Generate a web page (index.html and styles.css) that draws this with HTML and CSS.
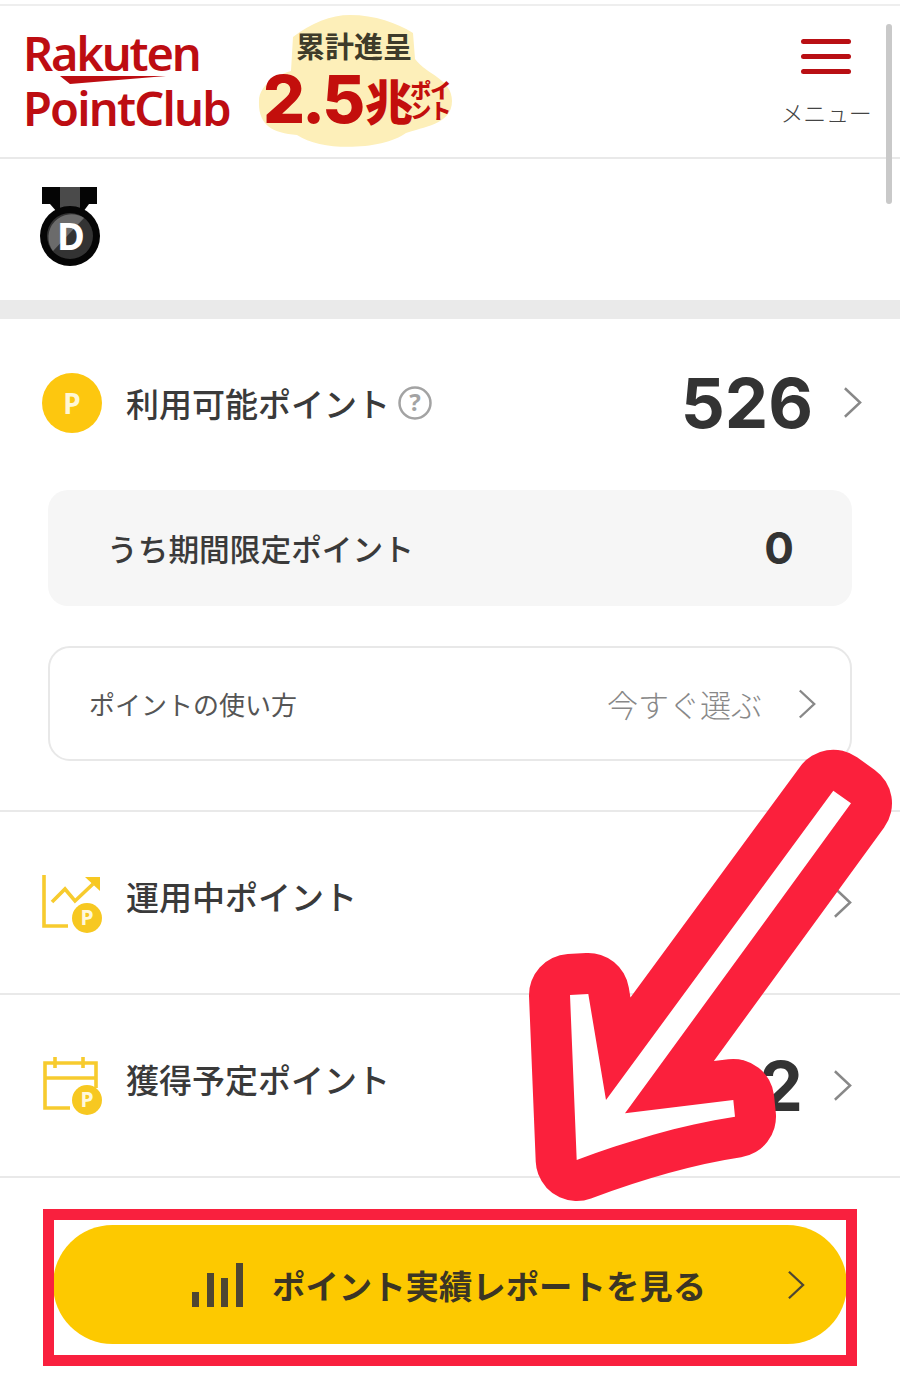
FILE: index.html
```html
<!DOCTYPE html>
<html lang="ja">
<head>
<meta charset="utf-8">
<title>Rakuten PointClub</title>
<link rel="stylesheet" href="styles.css">
</head>
<body>
<div class="page">
  <header class="header">
    <div class="logo">
      <div class="logo-top">Rakuten</div>
      <svg class="logo-swoosh" viewBox="0 0 110 9"><path d="M0 0H106L10 8Z"/></svg>
      <div class="logo-bottom">PointClub</div>
    </div>
    <div class="badge">
      <svg class="badge-blob" viewBox="0 0 200 136"><path d="M93 0C118 0 140 8 156 18L158 44C170 60 195 64 195 86C195 110 165 112 149 118C128 134 66 138 40 120C15 118 1 110 2 86C2 70 20 60 34 56L36 22C54 8 74 0 93 0Z"/></svg>
      <div class="badge-top">累計進呈</div>
      <div class="badge-main">
        <span class="badge-num">2.5</span>
        <span class="badge-unit">兆</span>
        <span class="badge-small">ポイ<br>ント</span>
      </div>
    </div>
    <div class="menu">
      <div class="burger"><i></i><i></i><i></i></div>
      <div class="menu-label">メニュー</div>
    </div>
  </header>

  <section class="rank">
    <svg class="medal" viewBox="0 0 62 80">
      <path class="m-black" d="M3 0H58V17H50L44 25H18L11 17H3Z"/>
      <path class="m-strip" d="M21 0H41V22H21Z"/>
      <circle class="m-black" cx="31" cy="49" r="30"/>
      <circle class="m-dark" cx="31" cy="49" r="23"/>
      <path class="m-light" d="M14 64A23 23 0 0 1 45 31Z"/>
      <text class="m-letter" x="32" y="63">D</text>
    </svg>
  </section>

  <div class="band"></div>

  <section class="points">
    <div class="row-main">
      <div class="coin">P</div>
      <div class="label">利用可能ポイント</div>
      <svg class="help" viewBox="0 0 34 34"><circle cx="17" cy="17" r="15.5"/><text x="17" y="25">?</text></svg>
      <div class="value">526</div>
      <svg class="chev chev-main" viewBox="0 0 20 34"><path d="M2 2L18 17L2 32"/></svg>
    </div>
    <div class="limited">
      <div class="limited-label">うち期間限定ポイント</div>
      <div class="limited-value">0</div>
    </div>
    <div class="usage">
      <div class="usage-label">ポイントの使い方</div>
      <div class="usage-link">今すぐ選ぶ</div>
      <svg class="chev chev-usage" viewBox="0 0 20 34"><path d="M2 2L18 17L2 32"/></svg>
    </div>
  </section>

  <section class="row">
    <svg class="row-icon" viewBox="0 0 64 64">
      <path class="i-line" d="M4 4V55H28"/>
      <path class="i-line" d="M12 31L25 18L35 30L53 13"/>
      <path class="i-fill" d="M45 6H60V20Z"/>
      <circle class="i-fill" cx="47" cy="47" r="15"/>
      <text class="i-p" x="47" y="54">P</text>
    </svg>
    <div class="label">運用中ポイント</div>
    <svg class="chev chev-row" viewBox="0 0 20 34"><path d="M2 2L18 17L2 32"/></svg>
  </section>

  <section class="row">
    <svg class="row-icon" viewBox="0 0 64 64">
      <path class="i-line" d="M5 24V9H56V24M5 24H56M5 24V54H30M56 24V34"/>
      <path class="i-line" d="M15 3V14M43 3V14"/>
      <circle class="i-fill" cx="47" cy="46" r="15"/>
      <text class="i-p" x="47" y="53">P</text>
    </svg>
    <div class="label">獲得予定ポイント</div>
    <div class="value value-row">22</div>
    <svg class="chev chev-row" viewBox="0 0 20 34"><path d="M2 2L18 17L2 32"/></svg>
  </section>

  <div class="cta-wrap">
    <div class="cta">
      <svg class="cta-icon" viewBox="0 0 52 44"><path d="M0 29H7V44H0ZM15 10H22V44H15ZM29 15H36V44H29ZM44 0H51V44H44Z"/></svg>
      <div class="cta-text">ポイント実績レポートを見る</div>
      <svg class="chev chev-cta" viewBox="0 0 20 34"><path d="M2 2L18 17L2 32"/></svg>
    </div>
  </div>

  <div class="scrollbar"></div>
  <svg class="arrow" viewBox="0 0 900 1380">
    <path class="arrow-shape" d="M833.3 790.7L851 803.3L625 1113.3L733.3 1100L735 1116.7C680 1125 625 1142 576.7 1160L570 995L588.3 994L606 1100Z"/>
  </svg>
  <div class="highlight"></div>
</div>
</body>
</html>
```

FILE: styles.css
```css
* { box-sizing: border-box; }
html, body { margin: 0; padding: 0; background: #fff; }
body { font-family: "Noto Sans CJK JP", "Noto Sans", sans-serif; color: #333; }
.page { position: relative; width: 900px; height: 1380px; overflow: hidden; padding-top: 4px; }

.header {
  display: flex; align-items: flex-start; height: 155px;
  border-top: 2px solid #eee; border-bottom: 2px solid #e9e9e9;
}
.logo { margin: 22px 0 0 23px; width: 234px; color: #bd0d12; font-family: "Noto Sans", sans-serif; font-weight: 600; }
.logo-top { font-size: 47px; line-height: 50px; letter-spacing: -2.2px; }
.logo-swoosh { display: block; width: 110px; height: 9px; margin: -2px 0 0 37px; fill: #bd0d12; }
.logo-bottom { font-size: 47px; line-height: 42px; letter-spacing: -1.8px; margin-top: 2px; }

.badge { position: relative; width: 200px; height: 136px; margin-top: 9px; text-align: center; }
.badge-blob { position: absolute; left: 0; top: 0; width: 200px; height: 136px; fill: #fdefb9; }
.badge-top { position: relative; padding-top: 8px; font-size: 29px; line-height: 44px; font-weight: 700; color: #3e3b2a; margin-left: -6px; }
.badge-main { position: relative; display: flex; align-items: center; padding-left: 6px; color: #c30f0c; font-weight: 900; }
.badge-num { font-family: Inter, sans-serif; font-weight: 800; font-size: 66px; line-height: 64px; letter-spacing: -3px; }
.badge-unit { font-size: 48px; line-height: 64px; margin-left: 3px; margin-right: -3px; }
.badge-small { font-size: 21px; line-height: 20px; text-align: left; letter-spacing: -1px; }

.menu { margin-left: auto; width: 100px; margin-right: 24px; display: flex; flex-direction: column; align-items: center; }
.burger { display: flex; flex-direction: column; gap: 10px; margin-top: 33px; width: 50px; }
.burger i { display: block; height: 5px; border-radius: 3px; background: #b90f14; }
.menu-label { margin-top: 21px; font-size: 23px; line-height: 34px; font-weight: 300; color: #444; letter-spacing: -0.2px; white-space: nowrap; }

.rank { height: 141px; padding: 28px 0 0 39px; }
.medal { display: block; width: 62px; height: 80px; }
.m-black { fill: #050505; }
.m-strip { fill: #4a4a4a; }
.m-dark { fill: #333; }
.m-light { fill: #6b6b6b; }
.m-letter { fill: #fff; font-family: "Noto Sans", sans-serif; font-weight: 700; font-size: 38px; text-anchor: middle; }

.band { height: 19px; background: #eaeaea; }

.points { border-bottom: 2px solid #e9e9e9; padding: 0 48px 49px; }
.row-main { display: flex; align-items: center; height: 171px; padding-bottom: 4px; margin: 0 -48px; padding-left: 42px; padding-right: 38px; }
.coin {
  width: 60px; height: 60px; border-radius: 50%; background: #fdc70f; color: #fff7d6;
  display: flex; align-items: center; justify-content: center;
  font-family: "Noto Sans", sans-serif; font-weight: 700; font-size: 28px; margin-right: 24px; flex: none;
}
.label { font-size: 33px; line-height: 48px; font-weight: 500; color: #3a3a3a; white-space: nowrap; }
.help { width: 34px; height: 34px; margin-left: 8px; fill: none; }
.help circle { stroke: #a3a3a3; stroke-width: 2.5; }
.help text { fill: #a3a3a3; stroke: none; font-family: "Noto Sans", sans-serif; font-weight: 700; font-size: 24px; text-anchor: middle; }
.value { margin-left: auto; font-family: Inter, sans-serif; font-weight: 700; font-size: 69px; line-height: 80px; color: #333; }
.chev { fill: none; stroke: #888; stroke-width: 2.6; }
.chev-main { width: 19px; height: 33px; margin-left: 30px; flex: none; }

.limited {
  display: flex; align-items: center; justify-content: space-between;
  height: 116px; background: #f6f6f6; border-radius: 20px; padding: 0 58px 0 59px;
}
.limited-label { font-size: 30.7px; line-height: 44px; font-weight: 500; color: #3a3a3a; white-space: nowrap; }
.limited-value { font-family: Inter, sans-serif; font-weight: 700; font-size: 44px; line-height: 56px; color: #333; }

.usage {
  display: flex; align-items: center; height: 115px; margin-top: 40px; padding: 0 34px 0 39px;
  border: 2px solid #e8e8e8; border-radius: 22px;
}
.usage-label { font-size: 26px; line-height: 38px; font-weight: 400; color: #555; white-space: nowrap; }
.usage-link { margin-left: auto; font-size: 31px; line-height: 44px; font-weight: 300; color: #888; white-space: nowrap; }
.chev-usage { width: 18px; height: 32px; margin-left: 36px; flex: none; }

.row { display: flex; align-items: center; height: 183px; padding: 0 48px 0 40px; border-bottom: 2px solid #e9e9e9; }
.row .label { margin-left: 22px; padding-bottom: 14px; }
.row-icon { width: 64px; height: 64px; flex: none; margin-top: 0; }
.i-line { fill: none; stroke: #f7cb2e; stroke-width: 3.6; }
.i-fill { fill: #f7c821; }
.i-p { fill: #fff8dc; font-family: "Noto Sans", sans-serif; font-weight: 700; font-size: 21px; text-anchor: middle; }
.value-row { font-size: 69px; letter-spacing: 0; }
.chev-row { width: 19px; height: 33px; margin-left: auto; flex: none; }
.value-row + .chev-row { margin-left: 30px; }

.cta-wrap { padding: 47px 53px 0; }
.cta { position: relative; display: flex; align-items: center; height: 119px; border-radius: 60px; background: #fdc900; padding: 0 42px 0 139px; }
.cta-icon { width: 52px; height: 44px; fill: #4e4632; flex: none; }
.cta-text { margin-left: 28px; font-size: 33.4px; line-height: 48px; font-weight: 700; color: #3b3524; white-space: nowrap; }
.chev-cta { width: 18px; height: 30px; margin-left: auto; stroke: #4e4632; }

.scrollbar { position: absolute; left: 886px; top: 24px; width: 6px; height: 180px; border-radius: 3px; background: #c9c9c9; }
.arrow { position: absolute; left: 0; top: 0; width: 900px; height: 1380px; }
.arrow-shape { fill: #fff; stroke: #fb203c; stroke-width: 82px; stroke-linejoin: round; paint-order: stroke; }
.highlight { position: absolute; left: 43px; top: 1209px; width: 814px; height: 157px; border: 11px solid #f9203e; }
```
